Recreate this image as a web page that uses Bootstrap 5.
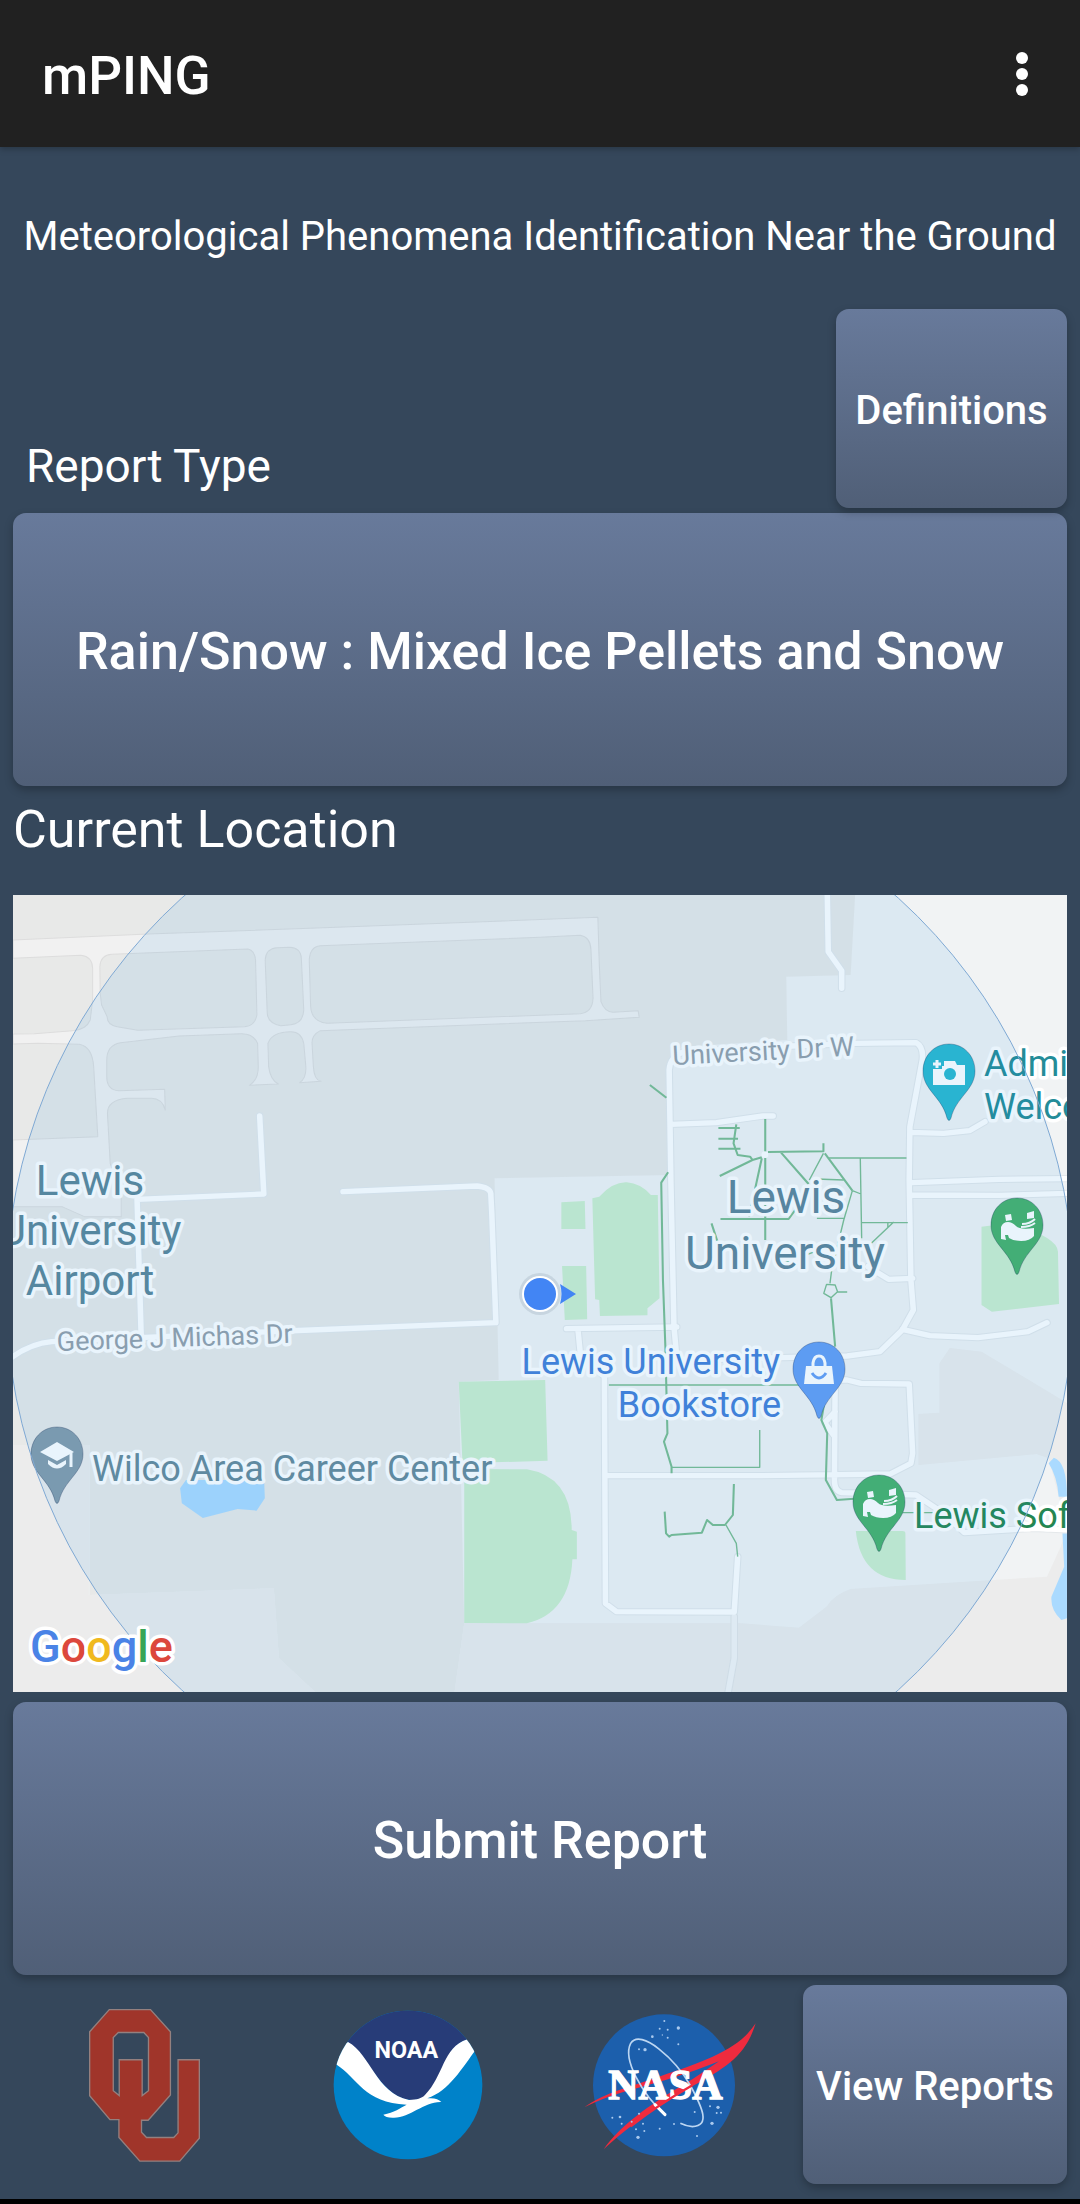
<!DOCTYPE html>
<html lang="en">
<head>
<meta charset="utf-8">
<meta name="viewport" content="width=device-width, initial-scale=1">
<title>mPING</title>
<link href="https://cdn.jsdelivr.net/npm/bootstrap@5.3.0/dist/css/bootstrap.min.css" rel="stylesheet">
<style>
  body { background: #35475b; color: #fff; font-family: Roboto, "Noto Sans", sans-serif; }
  .app-bar { background: #212121; min-height: 147px; padding: 0 40px 0 42px; box-shadow: 0 2px 6px rgba(0,0,0,.25); }
  .app-title { font-size: 53px; line-height: 60px; font-weight: 500; padding-top: 4px; }
  .menu-btn { width: 36px; height: 60px; }
  .screen { padding: 0 13px; }
  .tagline { font-size: 40px; line-height: 48px; padding: 66px 0 48px; white-space: nowrap; }
  .type-label { font-size: 46px; line-height: 54px; padding: 0 13px 15px; font-weight: 400; }
  .place-label { font-size: 52px; line-height: 60px; padding: 14px 0 35px; font-weight: 400; }
  .tile-btn, .tile-btn:hover, .tile-btn:active {
    color: #fff; border: 0; border-radius: 13px; font-weight: 500;
    background: linear-gradient(#687a9b, #505f77);
    box-shadow: 0 4px 8px rgba(0,0,0,.25);
  }
  .tile-wide { min-height: 273px; font-size: 52px; line-height: 60px; padding: 4px 12px 0; }
  .tile-small { min-height: 199px; font-size: 40px; line-height: 48px; padding: 4px 0 0; white-space: nowrap; }
  .defs-btn { width: 231px; }
  .view-btn { width: 264px; }
  .tile-gap-sm { margin-bottom: 5px; }
  .tile-gap { margin-top: 10px; }
  .map-view text { font-family: Roboto, "Noto Sans", sans-serif; paint-order: stroke; stroke: #fff; stroke-width: 7px; stroke-linejoin: round; }
  .nav-strip { height: 5px; background: #000; }
</style>
</head>
<body class="d-flex flex-column min-vh-100">
<header class="app-bar d-flex align-items-center justify-content-between">
  <h1 class="app-title m-0">mPING</h1>
  <button class="menu-btn btn p-0 border-0" type="button" aria-label="More options">
    <svg class="d-block" width="36" height="60" viewBox="0 0 36 60" fill="#fff"><circle cx="18" cy="14" r="6"/><circle cx="18" cy="30" r="6"/><circle cx="18" cy="46" r="6"/></svg>
  </button>
</header>

<main class="screen flex-grow-1">
  <p class="tagline text-center m-0">Meteorological Phenomena Identification Near the Ground</p>

  <div class="d-flex justify-content-between align-items-end tile-gap-sm">
    <h2 class="type-label m-0" id="reportType">Report Type</h2>
    <button class="tile-btn tile-small defs-btn btn" type="button">Definitions</button>
  </div>
  <button class="tile-btn tile-wide btn w-100 d-block" type="button" aria-describedby="reportType">Rain/Snow : Mixed Ice Pellets and Snow</button>

  <h2 class="place-label m-0">Current Location</h2>

  <svg class="map-view d-block w-100" viewBox="13 895 1054 797" role="img" aria-label="Map of the current location">
    <rect x="13" y="895" width="1054" height="797" fill="#f1f3f4"/>
    <!-- terrain, roads and footpaths -->
    <g transform="translate(0 880) scale(.34439 .33333)" stroke-linejoin="round" stroke-linecap="round">
      <path fill="#e8e9e8" d="M38 45H2483L2470 285 2283 290 2286 480 1980 500 1935 560 1945 885 1436 895 1448 1500 1332 1505 1348 2230 1320 2436H915L810 2335 795 2125 260 2145V1695H38Z"/>
      <path fill="#ececec" d="M38 1695H258V2145L795 2125 810 2335 915 2436H38ZM1348 2230H2150L2320 2243 2400 2180Q2420 2145 2470 2127L3040 2090 3080 2000 3100 1940V2436H1320ZM2758 1404L2850 1415 3100 1570V1950L3045 1735 3010 1722 2667 1755V1602L2728 1598V1450Z"/>
      <path fill="#f1f1f1" stroke="#dddddd" stroke-width="3" d="M38 180L430 162 900 145 1736 112 1740 250 1745 365Q1755 395 1780 397L1853 392 1856 412 1700 422 930 452Q905 465 906 490L910 560Q912 600 932 604L870 608Q890 595 888 560L882 490Q875 455 845 455 790 455 778 490L780 560Q785 600 808 612L724 616Q750 600 750 560L748 490Q735 460 700 461L520 468 350 488Q310 495 310 540V590Q310 630 345 632L478 628 480 690Q470 655 440 655H370Q312 660 312 700L320 850 352 950V1010H245L180 980H38Z"/>
      <g fill="#e8e9e8" stroke="#dddddd" stroke-width="3">
        <path d="M30 235L235 226Q268 230 269 265V360L262 420Q250 450 210 452L100 461 30 462Z"/>
        <path d="M30 492L110 490 230 493Q268 500 272 560L284 770 30 780Z"/>
        <path d="M291 340L290 260Q292 225 325 223L720 207Q740 212 742 240L746 405Q740 438 710 440L400 451 340 440Q312 435 311 410L295 375Z"/>
        <path d="M770 240Q772 205 805 203L840 202Q873 203 875 235L882 390Q880 430 845 434L815 437Q778 430 776 400Z"/>
        <path d="M898 240Q900 200 930 197L1568 172 1685 166Q1715 172 1716 210L1722 355Q1720 398 1685 401L950 430Q905 425 902 380Z"/>
      </g>
      <g fill="#cbefce">
        <path d="M1630 967L1698 963 1700 1047H1630ZM1632 1158H1702L1705 1318 1640 1320ZM1720 955L1740 950Q1780 905 1820 907 1860 910 1890 945H1910L1915 1255 1880 1285V1306L1742 1308 1740 1260 1728 1258Z"/>
        <path d="M1332 1505L1583 1500 1590 1742 1343 1750ZM1348 1767L1530 1768Q1660 1790 1660 1950L1675 1955V2038H1662Q1655 2200 1530 2230L1348 2229Z"/>
        <path d="M2850 1040L2930 1030Q3070 1070 3072 1115L3075 1272 2880 1295 2850 1275ZM2485 1953H2620Q2629 1953 2629 1960L2630 2100Q2500 2100 2485 1953Z"/>
      </g>
      <path fill="#aadaff" d="M523 1825L540 1800H767L769 1855 745 1892 690 1887 589 1914 528 1870ZM3045 1750L3060 1733Q3098 1745 3098 1850H3074Q3070 1790 3045 1750ZM3085 1960H3098V2215L3082 2220Q3050 2190 3053 2150L3090 2060Z"/>
      <g fill="none" stroke="#e4e8eb" stroke-width="22">
        <path id="roads" d="M754 708L766 942 398 958 410 1370M996 935L1385 918Q1422 922 1425 940L1428 1000 1440 1328 830 1353 150 1385Q90 1390 30 1435M2402 30L2405 215 2444 272V325M1965 1430L1957 1340 1948 900 1943 570Q1945 530 1985 515L2300 498 2480 490 2660 488Q2682 500 2678 540L2642 740 2640 900 2645 1200 2652 1290 2620 1350 2555 1415 2460 1428 2000 1440M1948 733L2080 728 2215 708H2245M2642 757L2740 760 2815 752 2860 725M2648 908L2900 898 3110 896M2648 945L2900 946 3110 940M1645 1346L1965 1341M1678 1346L1685 1420 1755 1490 1758 2170 1790 2195 2132 2196 2142 2030M1758 1787H2200L2585 1782 2645 1750 2650 1720 2640 1512 2500 1510 2460 1500H2420M2425 1500L2423 1800Q2423 1835 2445 1838L2660 1845 2740 1900 2800 1958 3000 1945 3110 1950M2620 1348L2700 1367 2840 1373 2985 1355 3040 1328M2425 1595L2395 1628 2420 1665M2520 1160L2580 1198 2650 1195"/>
      </g>
      <path fill="none" stroke="#e2e5e7" stroke-width="22" d="M2132 2210V2335L2112 2450"/>
      <path fill="none" stroke="#f3f4f5" stroke-width="16" d="M2132 2210V2335L2112 2450"/>
      <use href="#roads" fill="none" stroke="#fff" stroke-width="16"/>
      <g fill="none" stroke="#7abd90" stroke-width="6" stroke-linecap="butt">
        <path d="M1887 615L1935 653M1940 877L1920 908 1925 1200 1932 1400 1938 1660 1928 1685 1950 1760V1780M2086 744H2148M2086 776H2143M2086 806H2150M2138 733L2130 790 2142 825 2178 830 2185 840 2090 888M2185 840L2212 832M2222 717V1080M2230 816L2391 814V790M2268 818L2348 912M2395 820L2475 932M2212 835L2175 1010M2092 1017H2290L2330 960M2066 1030L2085 1090M2413 1255L2425 1400M2395 1560L2385 1620 2402 1660 2398 1800 2430 1860 2480 1856M1930 1895L1934 1960 1943 1970 1950 1965 2038 1958 2053 1920 2070 1935H2105L2128 1905 2131 1812"/>
        <path stroke-width="4" d="M2391 820L2350 900M2405 834H2632M2475 932L2450 1020 2415 1170 2410 1210M2475 932L2500 942M2498 835L2502 1075M2500 1028H2636M2595 1026L2530 1090M2578 1028V1042M2370 897L2450 900M2372 1015H2450M2400 1213L2425 1215 2432 1235 2413 1253 2392 1240ZM2432 1236H2460M2620 1898H2710M1768 1515H2330M1950 1762H2206V1650M2108 1935L2138 1990 2142 2030M2275 1150L2380 1110"/>
      </g>
      <circle cx="2221" cy="824" r="10" fill="#fff"/>
    </g>

    <!-- place labels -->
    <g font-size="42" fill="#5b8699" text-anchor="middle">
      <text x="90" y="1195">Lewis</text><text x="90" y="1245">University</text><text x="90" y="1295">Airport</text>
    </g>
    <g font-size="46" fill="#5d8499" text-anchor="middle">
      <text x="786" y="1213">Lewis</text><text x="785" y="1269">University</text>
    </g>
    <g font-size="27" fill="#95a0aa">
      <text transform="translate(673 1065) rotate(-3)">University Dr W</text>
      <text transform="translate(57 1351) rotate(-2)">George J Michas Dr</text>
    </g>
    <text x="92" y="1481" font-size="36" fill="#66899a">Wilco Area Career Center</text>
    <g font-size="36" fill="#437fd8" text-anchor="end">
      <text x="780" y="1374">Lewis University</text><text x="781" y="1417">Bookstore</text>
    </g>
    <g font-size="36" fill="#238c98"><text x="984" y="1076">Admi</text><text x="984" y="1119">Welco</text></g>
    <text x="914" y="1528" font-size="36" fill="#248652">Lewis Sof</text>

    <!-- place pins -->
    <defs>
      <path id="pin" d="M0 0C-15 0-26 12-26 27-26 46-7 53-2 74Q0 79 2 74C7 53 26 46 26 27 26 12 15 0 0 0Z" stroke-opacity=".3" stroke="#124" stroke-width="1"/>
      <g id="field">
        <path fill="#fff" d="M-12 17l6-1 1 6-6 1zM10 15l7-2v7l-7 1zM-16 29Q-14 24-9 24-5 24-1 28 3 32 17 30V38Q13 43 4 43-3 43-8 40L-9 37H-12L-11 42-16 41Z"/>
        <path fill="none" stroke="#fff" stroke-width="2" d="M5 26Q13 26 18 21M4 29Q13 29 18 25"/>
      </g>
    </defs>
    <g transform="translate(949 1044)">
      <use href="#pin" fill="#2ab8d0"/>
      <path fill="#fff" d="M-16 25H-7V22H-5V17H6L8 21H16V41H-16Z"/><circle cx="1" cy="30" r="6" fill="#2ab8d0"/>
      <path stroke="#fff" stroke-width="3" d="M-16 20H-8M-12 16V24"/>
    </g>
    <g transform="translate(1017 1198)"><use href="#pin" fill="#47b16a"/><use href="#field"/></g>
    <g transform="translate(879 1475)"><use href="#pin" fill="#47b16a"/><use href="#field"/></g>
    <g transform="translate(819 1342)">
      <use href="#pin" fill="#649df4"/>
      <path fill="#fff" d="M-13 24H13L15 42H-15Z"/><path fill="none" stroke="#fff" stroke-width="3" d="M-6 26V21Q-5 14 0 14T6 21V26"/>
      <path fill="none" stroke="#649df4" stroke-width="3" d="M-7 31Q0 41 7 31"/>
    </g>
    <g transform="translate(57 1427)">
      <use href="#pin" fill="#849bab"/>
      <path fill="#fff" d="M-17 25L0 15 17 25 0 34ZM-9 33L0 38 9 33V37Q0 46-9 37Z"/><path stroke="#fff" stroke-width="3" d="M14 26V40"/>
    </g>

    <!-- accuracy circle and current position -->
    <circle cx="540" cy="1294" r="534" fill="#288fe0" fill-opacity=".1" stroke="#7fa9d4" stroke-width="1"/>
    <circle cx="540" cy="1294" r="21" fill="#b9c8d4" fill-opacity=".6"/>
    <circle cx="540" cy="1294" r="18" fill="#fff"/><circle cx="540" cy="1294" r="16" fill="#4285f4"/>
    <path fill="#4285f4" d="M560 1284L576 1294 560 1304Q563 1294 560 1284Z"/>

    <text x="30" y="1662" font-size="45" font-weight="500"><tspan fill="#4a83e6">G</tspan><tspan fill="#dc483c">o</tspan><tspan fill="#f0b91e">o</tspan><tspan fill="#4a83e6">g</tspan><tspan fill="#38a556">l</tspan><tspan fill="#dc483c">e</tspan></text>
  </svg>

  <button class="tile-btn tile-wide tile-gap btn w-100 d-block" type="button">Submit Report</button>

  <div class="d-flex tile-gap">
    <div class="row g-0 flex-grow-1 align-items-center text-center">
      <div class="col-4">
        <svg width="113" height="156" viewBox="84 84 340 468" role="img" aria-label="University of Oklahoma">
          <path fill="#a0352a" stroke="#94807f" stroke-width="4" fill-rule="evenodd" d="M148 91H272L332 158V348L265 424H245V460L260 476H342L355 462V242H419V478L360 547H240L177 476V422H150L89 350V158ZM175 160L160 175V335L178 350V242H247V350L266 335V175L252 160Z"/>
        </svg>
      </div>
      <div class="col-4">
        <svg width="150" height="150" viewBox="817 92 450 450" role="img" aria-label="NOAA">
          <clipPath id="disc"><circle cx="1042" cy="317" r="223"/></clipPath>
          <g clip-path="url(#disc)">
            <rect x="817" y="92" width="450" height="450" fill="#0082c9"/>
            <path fill="#273c78" d="M817 92H1267V200L1218 181C1140 205 1150 320 1085 357Q1050 370 1015 352C950 320 920 230 860 188L817 200Z"/>
            <path fill="#fff" d="M862 188C930 225 945 340 1045 362 1070 361 1082 358 1092 348 1150 290 1145 205 1220 180L1245 212C1205 265 1165 335 1100 357Q1130 354 1142 368C1090 366 1050 415 1000 415Q975 416 968 406C1000 400 1020 385 1038 376 910 372 890 295 826 255L840 200Z"/>
          </g>
          <text x="1037" y="237" text-anchor="middle" font-family="Roboto, sans-serif" font-weight="700" font-size="70" fill="#fff">NOAA</text>
        </svg>
      </div>
      <div class="col-4">
        <svg width="174" height="146" viewBox="75 98 522 438" role="img" aria-label="NASA">
          <circle cx="315" cy="318" r="213" fill="#1c5fac"/>
          <path fill="#ef2b3e" d="M76 384Q120 350 210 322L300 292C440 245 540 210 590 132 560 230 500 265 405 318 290 385 210 440 134 510 190 430 290 365 400 300L480 246C420 270 350 295 250 322Q140 350 76 384Z"/>
          <path fill="none" stroke="#bcd6f2" stroke-width="5" d="M318 406C250 345 190 240 215 192 245 145 350 240 395 320 430 385 455 440 400 442Q380 440 364 432"/>
          <path stroke="#fff" stroke-width="9" stroke-linecap="round" d="M288 376L318 406"/>
          <text x="319" y="358" text-anchor="middle" font-family="'Liberation Serif', serif" font-weight="700" font-size="126" fill="#fff" stroke="#fff" stroke-width="4">NASA</text>
          <path fill="none" stroke="#ef2b3e" stroke-width="7" d="M215 441Q300 375 400 318"/>
          <g fill="#a9c9ee"><circle cx="358" cy="146" r="5"/><circle cx="326" cy="151" r="3"/><circle cx="302" cy="148" r="3"/><circle cx="316" cy="125" r="3"/><circle cx="280" cy="172" r="4"/><circle cx="310" cy="167" r="2"/><circle cx="326" cy="175" r="3"/><circle cx="358" cy="195" r="3"/><circle cx="258" cy="211" r="5"/><circle cx="240" cy="210" r="3"/><circle cx="183" cy="413" r="4"/><circle cx="160" cy="415" r="3"/><circle cx="188" cy="433" r="3"/><circle cx="218" cy="427" r="3"/><circle cx="252" cy="433" r="3"/><circle cx="231" cy="450" r="3"/><circle cx="237" cy="474" r="5"/><circle cx="256" cy="455" r="3"/><circle cx="302" cy="448" r="3"/><circle cx="345" cy="434" r="3"/><circle cx="414" cy="470" r="3"/><circle cx="477" cy="384" r="5"/><circle cx="453" cy="381" r="3"/><circle cx="473" cy="401" r="3"/><circle cx="486" cy="400" r="3"/><circle cx="459" cy="432" r="5"/><circle cx="407" cy="398" r="3"/><circle cx="240" cy="403" r="3"/></g>
        </svg>
      </div>
    </div>
    <button class="tile-btn tile-small view-btn btn" type="button">View Reports</button>
  </div>
</main>
<footer class="nav-strip"></footer>
<script src="https://cdn.jsdelivr.net/npm/bootstrap@5.3.0/dist/js/bootstrap.bundle.min.js"></script>
</body>
</html>
